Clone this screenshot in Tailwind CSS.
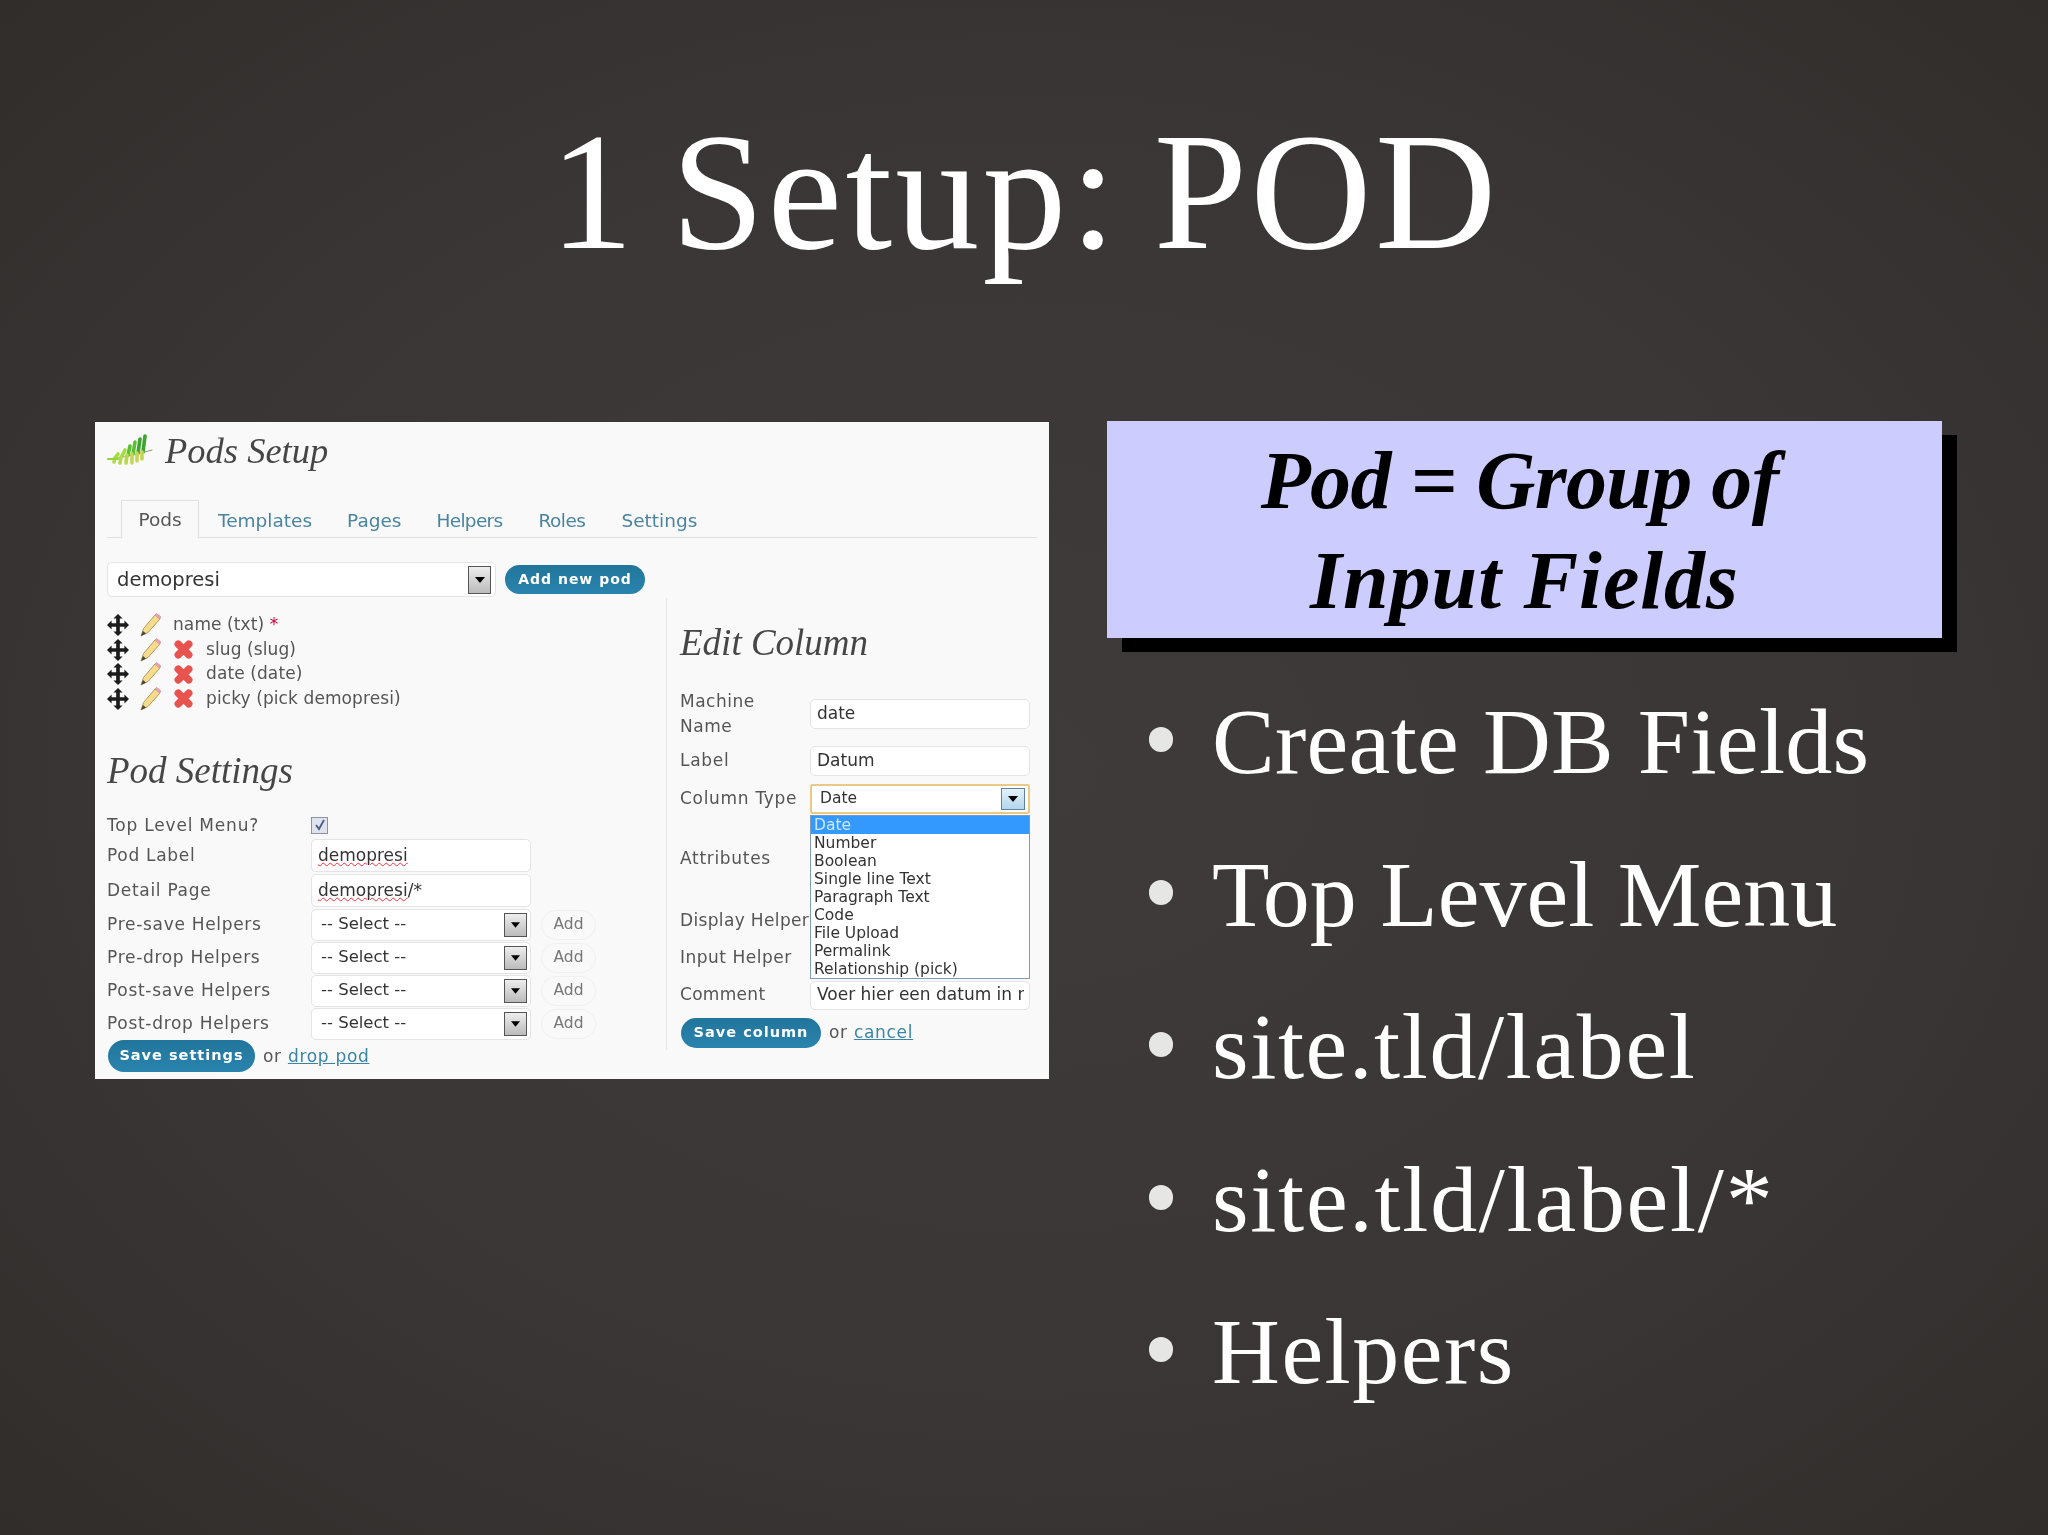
<!DOCTYPE html>
<html lang="en">
<head>
    <meta charset="UTF-8">
    <title>1 Setup: POD</title>
    <script src="https://cdn.jsdelivr.net/npm/@tailwindcss/browser@4"></script>
</head>
<body class="w-[2048px] h-[1535px] overflow-hidden bg-[radial-gradient(ellipse_at_center,#3f3b3a_0%,#3a3635_60%,#312d2b_100%)]">
    <!-- slide title -->
    <h1 class="h-[421px] pt-[96px] pl-[1px] text-center text-white font-['Liberation_Serif',serif] text-[168px] leading-[190px] tracking-[3.2px] [word-spacing:-11px]">1 Setup: POD</h1>

    <div class="flex pl-[95px]">
        <!-- screenshot of the pods admin -->
        <div class="w-[954px] h-[657px] mt-[1px] bg-[#f9f9f9] font-['DejaVu_Sans',sans-serif] text-[17px] tracking-[0.7px] text-[#555] blur-[0.5px]">
            <div class="flex items-center h-[79px] pl-[11px] pb-[20px] gap-[11px]">
                <svg class="w-[48px] h-[32px] -mt-[4px]" viewBox="0 0 48 32" fill="none" stroke-width="3.6" stroke-linecap="round">
                    <path d="M2 25 C16 24 32 20 46 16" stroke="#8a9a6a" stroke-width="1"/>
                    <path d="M37 18L39 2M32 19L34 5" stroke="#3da52e"/>
                    <path d="M27 20L29 8M22 21L24 12" stroke="#5cc034"/>
                    <path d="M16 22L19 16M9 24L12 20" stroke="#9de03e"/>
                    <path d="M36 18L36 25M31 19L31 27M26 20L26 29" stroke="#c4d655"/>
                    <path d="M21 21L20 29M15 23L14 29M9 24L8 28" stroke="#b4d84a"/>
                    <path d="M2 25L12 25" stroke="#8fd63c" stroke-width="2"/>
                </svg>
                <h2 class="font-['Liberation_Serif',serif] italic text-[36.5px] tracking-normal text-[#464646]">Pods Setup</h2>
            </div>
            <!-- tabs -->
            <div class="flex items-end h-[37px] mx-[12px] border-b border-[#dfdfdf] text-[#4a84a0] text-[18.5px] tracking-normal">
                <div class="flex items-center h-[38px] -mb-px ml-[14px] pt-[1px] w-[78px] justify-center bg-[#f9f9f9] border border-b-0 border-[#dfdfdf] text-[#555]">Pods</div>
                <div class="flex items-center h-[38px] pt-[5px] ml-[19px]">Templates</div>
                <div class="flex items-center h-[38px] pt-[5px] ml-[35px]">Pages</div>
                <div class="flex items-center h-[38px] pt-[5px] ml-[35px] tracking-[-0.7px]">Helpers</div>
                <div class="flex items-center h-[38px] pt-[5px] ml-[36px] tracking-[-0.5px]">Roles</div>
                <div class="flex items-center h-[38px] pt-[5px] ml-[36px]">Settings</div>
            </div>
            <div class="flex">
                <!-- left column -->
                <div class="w-[571px] pl-[12px] pt-[24px]">
                    <div class="flex items-center h-[35px]">
                        <div class="flex items-center justify-between w-[389px] h-[35px] pl-[9px] pr-[4px] rounded-[5px] border border-[#e4e4e4] bg-white text-[19.5px] tracking-normal text-[#333]">
                            demopresi
                            <span class="flex items-center justify-center w-[23px] h-[28px] border border-[#555] bg-gradient-to-b from-[#eee] to-[#bbb]">
                                <svg class="w-[10px] h-[6px]" viewBox="0 0 10 6"><path d="M0 0H10L5 6Z" fill="#000"/></svg>
                            </span>
                        </div>
                        <div class="flex items-center justify-center w-[140px] h-[29px] ml-[9px] rounded-full bg-gradient-to-b from-[#21759b] to-[#2a84ae] text-white font-bold text-[14px] tracking-[1px]">Add new pod</div>
                    </div>
                    <ul class="mt-[15.5px] tracking-[0.1px]">
                        <li class="flex items-center h-[24.7px]">
                            <svg class="w-[22px] h-[22px]" viewBox="0 0 24 24"><path d="M12 0L17 5H14V10H19V7L24 12L19 17V14H14V19H17L12 24L7 19H10V14H5V17L0 12L5 7V10H10V5H7Z" fill="#1c1c1c"/></svg>
                            <svg class="w-[21px] h-[24px] ml-[11px]" viewBox="0 0 21 24"><path d="M1 23L3.5 15.5L15 2L20 6L8 19.5Z" fill="#f4dc8c" stroke="#b59a60"/><path d="M15 2L16.5 .5L20.5 3.5L20 6Z" fill="#eba2b4" stroke="#d79aaa"/><path d="M1 23L3 18L6 20.5Z" fill="#444"/></svg>
                            <span class="ml-[12px]">name (txt) <span class="text-[#c8003c]">*</span></span>
                        </li>
                        <li class="flex items-center h-[24.7px]">
                            <svg class="w-[22px] h-[22px]" viewBox="0 0 24 24"><path d="M12 0L17 5H14V10H19V7L24 12L19 17V14H14V19H17L12 24L7 19H10V14H5V17L0 12L5 7V10H10V5H7Z" fill="#1c1c1c"/></svg>
                            <svg class="w-[21px] h-[24px] ml-[11px]" viewBox="0 0 21 24"><path d="M1 23L3.5 15.5L15 2L20 6L8 19.5Z" fill="#f4dc8c" stroke="#b59a60"/><path d="M15 2L16.5 .5L20.5 3.5L20 6Z" fill="#eba2b4" stroke="#d79aaa"/><path d="M1 23L3 18L6 20.5Z" fill="#444"/></svg>
                            <svg class="w-[19px] h-[19px] ml-[13px]" viewBox="0 0 18 18"><path d="M4 4L14 14M14 4L4 14" stroke="#e9534f" stroke-width="7" stroke-linecap="round"/></svg>
                            <span class="ml-[13px]">slug (slug)</span>
                        </li>
                        <li class="flex items-center h-[24.7px]">
                            <svg class="w-[22px] h-[22px]" viewBox="0 0 24 24"><path d="M12 0L17 5H14V10H19V7L24 12L19 17V14H14V19H17L12 24L7 19H10V14H5V17L0 12L5 7V10H10V5H7Z" fill="#1c1c1c"/></svg>
                            <svg class="w-[21px] h-[24px] ml-[11px]" viewBox="0 0 21 24"><path d="M1 23L3.5 15.5L15 2L20 6L8 19.5Z" fill="#f4dc8c" stroke="#b59a60"/><path d="M15 2L16.5 .5L20.5 3.5L20 6Z" fill="#eba2b4" stroke="#d79aaa"/><path d="M1 23L3 18L6 20.5Z" fill="#444"/></svg>
                            <svg class="w-[19px] h-[19px] ml-[13px]" viewBox="0 0 18 18"><path d="M4 4L14 14M14 4L4 14" stroke="#e9534f" stroke-width="7" stroke-linecap="round"/></svg>
                            <span class="ml-[13px]">date (date)</span>
                        </li>
                        <li class="flex items-center h-[24.7px]">
                            <svg class="w-[22px] h-[22px]" viewBox="0 0 24 24"><path d="M12 0L17 5H14V10H19V7L24 12L19 17V14H14V19H17L12 24L7 19H10V14H5V17L0 12L5 7V10H10V5H7Z" fill="#1c1c1c"/></svg>
                            <svg class="w-[21px] h-[24px] ml-[11px]" viewBox="0 0 21 24"><path d="M1 23L3.5 15.5L15 2L20 6L8 19.5Z" fill="#f4dc8c" stroke="#b59a60"/><path d="M15 2L16.5 .5L20.5 3.5L20 6Z" fill="#eba2b4" stroke="#d79aaa"/><path d="M1 23L3 18L6 20.5Z" fill="#444"/></svg>
                            <svg class="w-[19px] h-[19px] ml-[13px]" viewBox="0 0 18 18"><path d="M4 4L14 14M14 4L4 14" stroke="#e9534f" stroke-width="7" stroke-linecap="round"/></svg>
                            <span class="ml-[13px]">picky (pick demopresi)</span>
                        </li>
                    </ul>
                    <h3 class="flex items-center h-[50px] mt-[34px] font-['Liberation_Serif',serif] italic text-[37px] tracking-normal text-[#464646]">Pod Settings</h3>
                    <div class="flex items-center h-[18px] mt-[21px]">
                        <span class="w-[204px] tracking-[0.8px]">Top Level Menu?</span>
                        <span class="flex items-center justify-center w-[17px] h-[17px] border border-[#8a94a8] bg-[#dfe3ee]">
                            <svg class="w-[12px] h-[12px]" viewBox="0 0 12 12" fill="none"><path d="M2 6L5 10L10 1" stroke="#4a5a88" stroke-width="1.8"/></svg>
                        </span>
                    </div>
                    <div class="flex items-center h-[33px] mt-[5px]">
                        <span class="w-[204px]">Pod Label</span>
                        <div class="flex items-center w-[220px] h-[33px] pl-[6px] rounded-[5px] border border-[#e4e4e4] bg-white tracking-normal text-[#333] underline decoration-wavy decoration-red-500 decoration-1">demopresi</div>
                    </div>
                    <div class="flex items-center h-[33px] mt-[2px]">
                        <span class="w-[204px]">Detail Page</span>
                        <div class="flex items-center w-[220px] h-[33px] pl-[6px] rounded-[5px] border border-[#e4e4e4] bg-white tracking-normal text-[#333]"><span class="underline decoration-wavy decoration-red-500 decoration-1">demopresi</span>/*</div>
                    </div>
                    <div class="flex items-center h-[33px] mt-[1px]">
                        <span class="w-[204px]">Pre-save Helpers</span>
                        <div class="flex items-center justify-between w-[220px] h-[32px] pl-[9px] pr-[3px] rounded-[5px] border border-[#e4e4e4] bg-white text-[16.5px] tracking-normal text-[#333]">-- Select --<span class="flex items-center justify-center w-[23px] h-[24px] border border-[#555] bg-gradient-to-b from-[#eee] to-[#bbb]"><svg class="w-[9px] h-[6px]" viewBox="0 0 10 6"><path d="M0 0H10L5 6Z" fill="#000"/></svg></span></div>
                        <div class="flex items-center justify-center w-[55px] h-[30px] ml-[10px] rounded-full border border-[#f0f0f0] text-[15.5px] tracking-normal text-[#777]">Add</div>
                    </div>
                    <div class="flex items-center h-[33px]">
                        <span class="w-[204px]">Pre-drop Helpers</span>
                        <div class="flex items-center justify-between w-[220px] h-[32px] pl-[9px] pr-[3px] rounded-[5px] border border-[#e4e4e4] bg-white text-[16.5px] tracking-normal text-[#333]">-- Select --<span class="flex items-center justify-center w-[23px] h-[24px] border border-[#555] bg-gradient-to-b from-[#eee] to-[#bbb]"><svg class="w-[9px] h-[6px]" viewBox="0 0 10 6"><path d="M0 0H10L5 6Z" fill="#000"/></svg></span></div>
                        <div class="flex items-center justify-center w-[55px] h-[30px] ml-[10px] rounded-full border border-[#f0f0f0] text-[15.5px] tracking-normal text-[#777]">Add</div>
                    </div>
                    <div class="flex items-center h-[33px]">
                        <span class="w-[204px]">Post-save Helpers</span>
                        <div class="flex items-center justify-between w-[220px] h-[32px] pl-[9px] pr-[3px] rounded-[5px] border border-[#e4e4e4] bg-white text-[16.5px] tracking-normal text-[#333]">-- Select --<span class="flex items-center justify-center w-[23px] h-[24px] border border-[#555] bg-gradient-to-b from-[#eee] to-[#bbb]"><svg class="w-[9px] h-[6px]" viewBox="0 0 10 6"><path d="M0 0H10L5 6Z" fill="#000"/></svg></span></div>
                        <div class="flex items-center justify-center w-[55px] h-[30px] ml-[10px] rounded-full border border-[#f0f0f0] text-[15.5px] tracking-normal text-[#777]">Add</div>
                    </div>
                    <div class="flex items-center h-[33px]">
                        <span class="w-[204px]">Post-drop Helpers</span>
                        <div class="flex items-center justify-between w-[220px] h-[32px] pl-[9px] pr-[3px] rounded-[5px] border border-[#e4e4e4] bg-white text-[16.5px] tracking-normal text-[#333]">-- Select --<span class="flex items-center justify-center w-[23px] h-[24px] border border-[#555] bg-gradient-to-b from-[#eee] to-[#bbb]"><svg class="w-[9px] h-[6px]" viewBox="0 0 10 6"><path d="M0 0H10L5 6Z" fill="#000"/></svg></span></div>
                        <div class="flex items-center justify-center w-[55px] h-[30px] ml-[10px] rounded-full border border-[#f0f0f0] text-[15.5px] tracking-normal text-[#777]">Add</div>
                    </div>
                    <div class="flex items-center">
                        <div class="flex items-center justify-center w-[147px] h-[32px] ml-[1px] rounded-full bg-gradient-to-b from-[#21759b] to-[#2a84ae] text-white font-bold text-[14.5px] tracking-[1px]">Save settings</div>
                        <span class="ml-[8px]">or <span class="underline text-[#3a85a5]">drop pod</span></span>
                    </div>
                </div>
                <!-- right column -->
                <div class="w-[371px] h-[452px] mt-[60px] pl-[13px] border-l border-[#e5e5e5]">
                    <h3 class="flex items-center h-[50px] mt-[20px] font-['Liberation_Serif',serif] italic text-[37px] tracking-normal text-[#464646]">Edit Column</h3>
                    <div class="flex items-center h-[48px] mt-[22px]">
                        <span class="w-[130px] leading-[25px] tracking-[0.5px]">Machine<br>Name</span>
                        <div class="flex items-center w-[220px] h-[30px] pl-[6px] rounded-[5px] border border-[#e4e4e4] bg-white tracking-normal text-[#333]">date</div>
                    </div>
                    <div class="flex items-center h-[30px] mt-[8px]">
                        <span class="w-[130px]">Label</span>
                        <div class="flex items-center w-[220px] h-[30px] pl-[6px] rounded-[5px] border border-[#e4e4e4] bg-white tracking-normal text-[#333]">Datum</div>
                    </div>
                    <div class="relative flex items-center h-[30px] mt-[8px]">
                        <span class="w-[130px]">Column Type</span>
                        <div class="flex items-center justify-between w-[220px] h-[30px] pl-[8px] pr-[3px] rounded-[3px] border-2 border-[#e8c987] bg-white text-[15.5px] tracking-normal text-[#333]">Date<span class="flex items-center justify-center w-[24px] h-[22px] border border-[#5c84a8] bg-gradient-to-b from-[#e4f2fb] to-[#b4d6ec]"><svg class="w-[10px] h-[6px]" viewBox="0 0 10 6"><path d="M0 0H10L5 6Z" fill="#000"/></svg></span></div>
                        <!-- open dropdown lies over the rows below -->
                        <ul class="absolute left-[130px] top-[31px] w-[220px] h-[164px] border border-[#7f9db9] bg-white text-[15.5px] tracking-normal leading-[18px] text-[#333]">
                            <li class="pl-[3px] bg-[#3399ff] text-[#cfe6ff]">Date</li>
                            <li class="pl-[3px]">Number</li>
                            <li class="pl-[3px]">Boolean</li>
                            <li class="pl-[3px]">Single line Text</li>
                            <li class="pl-[3px]">Paragraph Text</li>
                            <li class="pl-[3px]">Code</li>
                            <li class="pl-[3px]">File Upload</li>
                            <li class="pl-[3px]">Permalink</li>
                            <li class="pl-[3px]">Relationship (pick)</li>
                        </ul>
                    </div>
                    <div class="flex items-center h-[90px]">Attributes</div>
                    <div class="flex items-center h-[34px] tracking-[0.35px]">Display Helper</div>
                    <div class="flex items-center h-[40px] tracking-[0.5px]">Input Helper</div>
                    <div class="flex items-center h-[34px]">
                        <span class="w-[130px] tracking-[0.3px]">Comment</span>
                        <div class="flex items-center w-[220px] h-[29px] pl-[6px] rounded-[5px] border border-[#e4e4e4] bg-white tracking-normal text-[#333]"><span class="w-[207px] overflow-hidden whitespace-nowrap">Voer hier een datum in n</span></div>
                    </div>
                    <div class="flex items-center mt-[6px]">
                        <div class="flex items-center justify-center w-[140px] h-[30px] ml-[1px] rounded-full bg-gradient-to-b from-[#21759b] to-[#2a84ae] text-white font-bold text-[14.5px] tracking-[1px]">Save column</div>
                        <span class="ml-[8px]">or <span class="underline text-[#3a85a5]">cancel</span></span>
                    </div>
                </div>
            </div>
        </div>

        <!-- right side of the slide -->
        <div class="w-[835px] ml-[58px]">
            <div class="flex flex-col items-center justify-center h-[217px] pt-[3px] bg-[#ccccff] shadow-[15px_14px_0_#000] font-['Liberation_Serif',serif] italic font-bold text-black text-[82px] leading-[100px]">
                <div class="pr-[10px] tracking-[-0.7px]">Pod = Group of</div>
                <div class="tracking-[1px]">Input Fields</div>
            </div>
            <ul class="mt-[27px] font-['Liberation_Serif',serif] text-white text-[94px] leading-[152.5px]">
                <li class="flex items-center h-[152.5px] tracking-[0.3px]"><span class="w-[24px] h-[25px] ml-[42px] mr-[39px] -mt-[3px] rounded-full bg-[#e6e6e4]"></span>Create DB Fields</li>
                <li class="flex items-center h-[152.5px]"><span class="w-[24px] h-[25px] ml-[42px] mr-[39px] -mt-[3px] rounded-full bg-[#e6e6e4]"></span>Top Level Menu</li>
                <li class="flex items-center h-[152.5px] tracking-[1.6px]"><span class="w-[24px] h-[25px] ml-[42px] mr-[39px] -mt-[3px] rounded-full bg-[#e6e6e4]"></span>site.tld/label</li>
                <li class="flex items-center h-[152.5px] tracking-[1.7px]"><span class="w-[24px] h-[25px] ml-[42px] mr-[39px] -mt-[3px] rounded-full bg-[#e6e6e4]"></span>site.tld/label/*</li>
                <li class="flex items-center h-[152.5px] tracking-[1.5px]"><span class="w-[24px] h-[25px] ml-[42px] mr-[39px] -mt-[3px] rounded-full bg-[#e6e6e4]"></span>Helpers</li>
            </ul>
        </div>
    </div>
</body>
</html>
